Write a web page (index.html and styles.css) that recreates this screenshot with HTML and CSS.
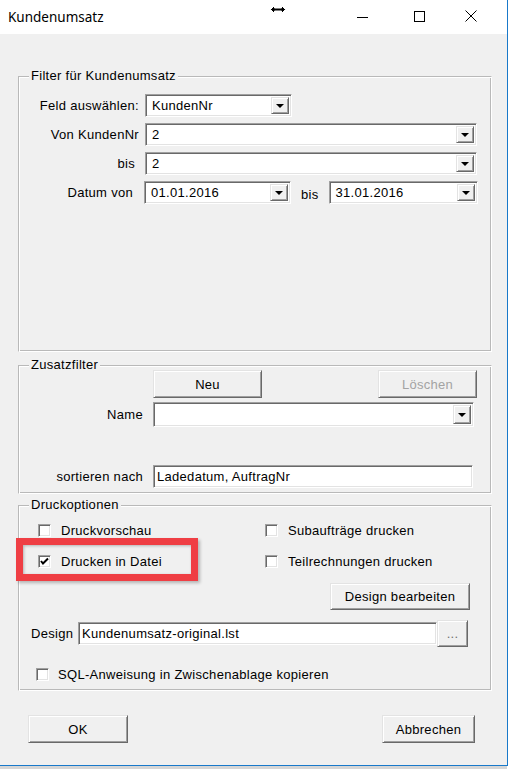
FILE: index.html
```html
<!DOCTYPE html>
<html lang="de">
    <head>
        <meta charset="UTF-8">
        <title>Kundenumsatz</title>
        <link rel="stylesheet" href="styles.css">
    </head>
    <body>
        <div class="window">
            <div class="titlebar">
                <span class="title">Kundenumsatz</span>
                <svg class="resize-cursor" width="16" height="9" viewBox="0 0 16 9">
                    <polygon points="0.5,4.5 4.5,0.5 4.5,3 11.5,3 11.5,0.5 15.5,4.5 11.5,8.5 11.5,6 4.5,6 4.5,8.5" fill="#000" stroke="#fff" stroke-width="1"/>
                </svg>
                <div class="caption-buttons">
                    <span class="caption-btn cap-min">
                        <svg width="11" height="11" viewBox="0 0 11 11"><line x1="0" y1="5.5" x2="11" y2="5.5" stroke="#000"/></svg>
                    </span>
                    <span class="caption-btn cap-max">
                        <svg width="11" height="11" viewBox="0 0 11 11"><rect x="0.5" y="0.5" width="10" height="10" fill="none" stroke="#000"/></svg>
                    </span>
                    <span class="caption-btn cap-close">
                        <svg width="12" height="12" viewBox="0 0 12 12"><path d="M0.5 0.5 L11.5 11.5 M11.5 0.5 L0.5 11.5" stroke="#000" stroke-width="1"/></svg>
                    </span>
                </div>
            </div>

            <div class="client">
                <div class="group group-filter">
                    <span class="group-title">Filter für Kundenumsatz</span>
                    <div class="filter-row">
                        <span class="label">Feld auswählen:</span>
                        <div class="combo combo-short"><span class="combo-text">KundenNr</span><span class="combo-arrow"></span></div>
                    </div>
                    <div class="filter-row">
                        <span class="label">Von KundenNr</span>
                        <div class="combo combo-long"><span class="combo-text">2</span><span class="combo-arrow"></span></div>
                    </div>
                    <div class="filter-row">
                        <span class="label label-bis">bis</span>
                        <div class="combo combo-long"><span class="combo-text">2</span><span class="combo-arrow"></span></div>
                    </div>
                    <div class="filter-row">
                        <span class="label label-datum">Datum von</span>
                        <div class="combo combo-short"><span class="combo-text">01.01.2016</span><span class="combo-arrow"></span></div>
                        <span class="date-bis">bis</span>
                        <div class="combo combo-date"><span class="combo-text">31.01.2016</span><span class="combo-arrow"></span></div>
                    </div>
                </div>

                <div class="group group-extra">
                    <span class="group-title">Zusatzfilter</span>
                    <div class="extra-row extra-buttons">
                        <span class="label"></span>
                        <button class="btn btn-neu">Neu</button>
                        <button class="btn btn-loeschen" disabled>Löschen</button>
                    </div>
                    <div class="extra-row extra-name">
                        <span class="label">Name</span>
                        <div class="combo combo-name"><span class="combo-text"></span><span class="combo-arrow"></span></div>
                    </div>
                    <div class="extra-row extra-sort">
                        <span class="label">sortieren nach</span>
                        <div class="field field-sort">Ladedatum, AuftragNr</div>
                    </div>
                </div>

                <div class="group group-print">
                    <span class="group-title">Druckoptionen</span>
                    <div class="check-grid">
                        <label class="check"><span class="box"></span>Druckvorschau</label>
                        <label class="check"><span class="box"></span>Subaufträge drucken</label>
                        <label class="check">
                            <span class="box"><svg width="11" height="11" viewBox="0 0 11 11"><polyline points="2,5 4,7.5 9,2.5" fill="none" stroke="#000" stroke-width="2"/></svg></span>Drucken in Datei
                        </label>
                        <label class="check"><span class="box"></span>Teilrechnungen drucken</label>
                    </div>
                    <div class="design-edit">
                        <button class="btn btn-design">Design bearbeiten</button>
                    </div>
                    <div class="design-row">
                        <span class="design-label">Design</span>
                        <div class="field field-design">Kundenumsatz-original.lst</div>
                        <button class="btn btn-dots">...</button>
                    </div>
                    <label class="check check-sql"><span class="box"></span>SQL-Anweisung in Zwischenablage kopieren</label>
                </div>

                <div class="dialog-buttons">
                    <button class="btn btn-ok">OK</button>
                    <button class="btn btn-cancel">Abbrechen</button>
                </div>
            </div>

            <div class="highlight"></div>
        </div>
        <div class="below"></div>
    </body>
</html>
```

FILE: styles.css
```css
* {
    margin: 0;
    padding: 0;
    box-sizing: border-box;
}
body {
    background: #fff;
    font-family: "Liberation Sans", Arial, sans-serif;
    font-size: 13px;
    letter-spacing: 0.3px;
    color: #000;
}
.window {
    position: relative;
    width: 508px;
    height: 766px;
    background: #f0f0f0;
    border-right: 1px solid #1979ca;
    border-bottom: 1px solid #1979ca;
}
.below {
    width: 507px;
    height: 3px;
    background: #d6d6d6;
}

/* title bar */
.titlebar {
    position: relative;
    height: 34px;
    background: #fff;
    display: flex;
    align-items: center;
}
.title {
    font-family: "Noto Sans", sans-serif;
    font-size: 13.5px;
    letter-spacing: 0;
    padding-left: 8px;
    padding-bottom: 1px;
}
.resize-cursor {
    position: absolute;
    left: 270px;
    top: 5px;
}
.caption-buttons {
    display: flex;
    margin-left: auto;
    margin-right: 12px;
    height: 34px;
}
.caption-btn {
    display: flex;
    align-items: center;
    justify-content: center;
    height: 34px;
}
.caption-btn svg {
    display: block;
}
.cap-min {
    width: 58px;
}
.cap-max {
    width: 56px;
    padding-bottom: 1px;
}
.cap-close {
    width: 48px;
    padding-bottom: 2px;
}

/* dialog client area */
.client {
    padding: 42px 16px 0 18px;
}
.group {
    position: relative;
    width: 474px;
    border: 1px solid;
    border-color: #b9b9b9 #fff #fff #b9b9b9;
    box-shadow: inset 1px 1px #fff, inset -1px -1px #b9b9b9;
}
.group-title {
    position: absolute;
    top: -8px;
    left: 10px;
    padding: 0 2px 0 2px;
    background: #f0f0f0;
    line-height: 14px;
}

/* 3d controls */
.btn {
    font-family: "Liberation Sans", Arial, sans-serif;
    font-size: 13px;
    letter-spacing: 0.3px;
    color: #000;
    background: #f0f0f0;
    border: 1px solid;
    border-color: #e3e3e3 #696969 #696969 #e3e3e3;
    box-shadow: inset 1px 1px #fff, inset -1px -1px #a0a0a0;
    height: 28px;
}
.btn:disabled {
    color: #a3a3a3;
}
.field,
.combo {
    background: #fff;
    border: 1px solid;
    border-color: #a0a0a0 #fff #fff #a0a0a0;
    box-shadow: inset 1px 1px #696969, inset -1px -1px #e3e3e3;
    height: 23px;
}
.field {
    padding: 0 3px;
    line-height: 21px;
    white-space: nowrap;
}
.combo {
    display: flex;
    align-items: stretch;
    padding: 2px;
}
.combo-text {
    flex: 1;
    padding-left: 4px;
    line-height: 17px;
}
.combo-arrow {
    position: relative;
    width: 18px;
    background: #f0f0f0;
    border: 1px solid;
    border-color: #e3e3e3 #696969 #696969 #e3e3e3;
    box-shadow: inset 1px 1px #fff, inset -1px -1px #a0a0a0;
}
.combo-arrow::after {
    content: "";
    position: absolute;
    left: 4px;
    top: 6px;
    border-left: 4px solid transparent;
    border-right: 4px solid transparent;
    border-top: 4px solid #000;
}

/* filter group */
.group-filter {
    height: 276px;
    padding-top: 17px;
}
.filter-row {
    display: flex;
    align-items: center;
    height: 23px;
    margin-bottom: 6px;
}
.filter-row .label {
    width: 120px;
    text-align: right;
    margin-right: 6px;
}
.filter-row .label-bis {
    padding-right: 4px;
}
.filter-row .label-datum {
    padding-right: 6px;
    margin-right: 5px;
}
.combo-short {
    width: 147px;
}
.combo-long {
    width: 332px;
}
.combo-date {
    width: 149px;
}
.date-bis {
    margin: 4px 10px 0 10px;
}

/* zusatzfilter group */
.group-extra {
    margin-top: 13px;
    height: 129px;
    padding-top: 4px;
}
.extra-row {
    display: flex;
    align-items: center;
}
.extra-row .label {
    width: 124px;
    text-align: right;
    margin-right: 10px;
}
.btn-neu {
    width: 109px;
}
.btn-loeschen {
    width: 99px;
    margin-left: 116px;
}
.extra-name {
    margin-top: 4px;
}
.combo-name {
    width: 321px;
    height: 25px;
}
.combo-name .combo-arrow::after {
    top: 7px;
}
.extra-sort {
    margin-top: 38px;
}
.field-sort {
    width: 320px;
}

/* druckoptionen group */
.group-print {
    margin-top: 11px;
    height: 186px;
    padding: 14px 0 0 19px;
}
.check-grid {
    display: grid;
    grid-template-columns: 227px 1fr;
    row-gap: 11px;
}
.check {
    display: flex;
    align-items: center;
    height: 20px;
}
.box {
    display: flex;
    align-items: center;
    justify-content: center;
    width: 13px;
    height: 13px;
    margin-right: 10px;
    background: #fff;
    border: 1px solid;
    border-color: #a0a0a0 #fff #fff #a0a0a0;
    box-shadow: inset 1px 1px #696969, inset -1px -1px #e3e3e3;
}
.design-edit {
    display: flex;
    justify-content: flex-end;
    margin: 12px 21px 0 0;
}
.btn-design {
    width: 140px;
    height: 27px;
}
.design-row {
    display: flex;
    align-items: center;
    margin: 10px 0 0 -7px;
}
.design-label {
    width: 47px;
}
.field-design {
    width: 359px;
}
.btn-dots {
    width: 31px;
    height: 27px;
    color: #707070;
}
.check-sql {
    margin: 17px 0 0 -2px;
}
.check-sql .box {
    margin-right: 9px;
}

/* ok / cancel */
.dialog-buttons {
    display: flex;
    justify-content: space-between;
    width: 447px;
    margin: 24px 0 0 10px;
}
.btn-ok {
    width: 100px;
}
.btn-cancel {
    width: 93px;
}

/* red annotation frame */
.highlight {
    position: absolute;
    left: 16px;
    top: 538px;
    width: 182px;
    height: 43px;
    border: 7px solid #ef3e44;
    box-shadow: 2px 2px 3px rgba(0, 0, 0, 0.25), inset 1px 1px 3px rgba(0, 0, 0, 0.25);
}
```
